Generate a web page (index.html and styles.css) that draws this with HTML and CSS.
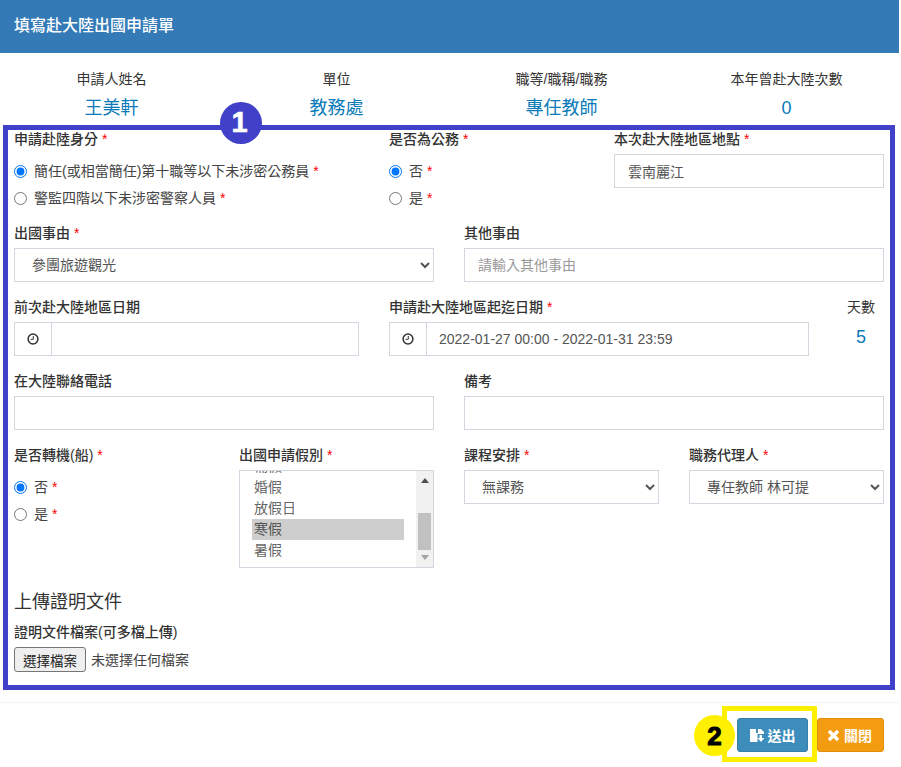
FILE: index.html
```html
<!DOCTYPE html>
<html lang="zh-Hant">
<head>
  <meta charset="UTF-8" />
  <meta name="viewport" content="width=device-width, initial-scale=1.0"/>
  <title>填寫赴大陸出國申請單</title>
  <link rel="stylesheet" href="styles.css">
</head>
<body>

<div class="modal">
  <div class="modal-header">填寫赴大陸出國申請單</div>

  <div class="info">
    <div class="info-item"><div class="info-label">申請人姓名</div><div class="info-value">王美軒</div></div>
    <div class="info-item"><div class="info-label">單位</div><div class="info-value">教務處</div></div>
    <div class="info-item"><div class="info-label">職等/職稱/職務</div><div class="info-value">專任教師</div></div>
    <div class="info-item"><div class="info-label">本年曾赴大陸次數</div><div class="info-value">0</div></div>
  </div>

  <form class="form">
    <div class="row row-first">
      <div class="col span-5">
        <label class="label">申請赴陸身分 <i>*</i></label>
        <label class="radio"><input type="radio" name="identity" checked> 簡任(或相當簡任)第十職等以下未涉密公務員 <i>*</i></label>
        <label class="radio"><input type="radio" name="identity"> 警監四階以下未涉密警察人員 <i>*</i></label>
      </div>
      <div class="col span-3">
        <label class="label">是否為公務 <i>*</i></label>
        <label class="radio"><input type="radio" name="official" checked> 否 <i>*</i></label>
        <label class="radio"><input type="radio" name="official"> 是 <i>*</i></label>
      </div>
      <div class="col span-4">
        <label class="label">本次赴大陸地區地點 <i>*</i></label>
        <input class="control" type="text" value="雲南麗江">
      </div>
    </div>

    <div class="row">
      <div class="col span-6">
        <label class="label">出國事由 <i>*</i></label>
        <select class="control"><option>參團旅遊觀光</option></select>
      </div>
      <div class="col span-6">
        <label class="label">其他事由</label>
        <input class="control" type="text" placeholder="請輸入其他事由">
      </div>
    </div>

    <div class="row">
      <div class="col span-5">
        <label class="label">前次赴大陸地區日期</label>
        <div class="input-group">
          <span class="addon"><svg width="12" height="12" viewBox="0 0 12 12"><circle cx="6" cy="6" r="4.9" fill="none" stroke="#333" stroke-width="1.5"/><path d="M6.3 3v3.3H3.6" fill="none" stroke="#333" stroke-width="1"/></svg></span>
          <input class="control" type="text">
        </div>
      </div>
      <div class="col span-6">
        <label class="label">申請赴大陸地區起迄日期 <i>*</i></label>
        <div class="input-group">
          <span class="addon"><svg width="12" height="12" viewBox="0 0 12 12"><circle cx="6" cy="6" r="4.9" fill="none" stroke="#333" stroke-width="1.5"/><path d="M6.3 3v3.3H3.6" fill="none" stroke="#333" stroke-width="1"/></svg></span>
          <input class="control" type="text" value="2022-01-27 00:00 - 2022-01-31 23:59">
        </div>
      </div>
      <div class="col span-1 days">
        <div class="days-label">天數</div>
        <div class="days-value">5</div>
      </div>
    </div>

    <div class="row">
      <div class="col span-6">
        <label class="label">在大陸聯絡電話</label>
        <input class="control" type="text">
      </div>
      <div class="col span-6">
        <label class="label">備考</label>
        <input class="control" type="text">
      </div>
    </div>

    <div class="row row-last">
      <div class="col span-3">
        <label class="label">是否轉機(船) <i>*</i></label>
        <label class="radio"><input type="radio" name="transfer" checked> 否 <i>*</i></label>
        <label class="radio"><input type="radio" name="transfer"> 是 <i>*</i></label>
      </div>
      <div class="col span-3">
        <label class="label">出國申請假別 <i>*</i></label>
        <div class="listbox">
          <ul class="list">
            <li>補假</li>
            <li>婚假</li>
            <li>放假日</li>
            <li class="selected">寒假</li>
            <li>暑假</li>
          </ul>
          <div class="scrollbar">
            <span class="arrow-up"></span>
            <span class="thumb"></span>
            <span class="arrow-down"></span>
          </div>
        </div>
      </div>
      <div class="col span-3">
        <label class="label">課程安排 <i>*</i></label>
        <select class="control"><option>無課務</option></select>
      </div>
      <div class="col span-3">
        <label class="label">職務代理人 <i>*</i></label>
        <select class="control"><option>專任教師 林可提</option></select>
      </div>
    </div>

    <div class="upload">
      <h4 class="upload-title">上傳證明文件</h4>
      <label class="label">證明文件檔案(可多檔上傳)</label>
      <div class="file">
        <button type="button" class="file-btn">選擇檔案</button>
        <span>未選擇任何檔案</span>
      </div>
    </div>
  </form>

  <div class="modal-footer">
    <button type="button" class="btn btn-send">
      <svg width="15" height="13" viewBox="0 0 15 13"><path fill="#fff" d="M0 0h6v4h2V0h3l3 3v2H7.500v8H0z"/><path fill="#fff" d="M9.500 6H12v3h2.500L11 13 7.500 9h2z"/></svg>
      送出
    </button>
    <button type="button" class="btn btn-close">
      <svg width="13" height="13" viewBox="0 0 13 13"><path d="M2 2l9 9M11 2l-9 9" stroke="#fff" stroke-width="3.400" fill="none"/></svg>
      關閉
    </button>
  </div>

  <!-- annotations drawn over the form -->
  <div class="mark-box"></div>
  <div class="badge badge-1">1</div>
  <div class="mark-send"></div>
  <div class="badge badge-2">2</div>
</div>

</body>
</html>
```

FILE: styles.css
```css
* { box-sizing: border-box; }
body {
  margin: 0; background: #fff; color: #333;
  font-family: "Liberation Sans", "Noto Sans CJK TC", sans-serif;
  font-size: 14px; line-height: 20px;
}
i { color: #f00; font-style: normal; font-weight: 400; }

.modal { position: relative; width: 899px; height: 767px; overflow: hidden; }
.modal-header {
  height: 53px; padding: 15px 14px; background: #337ab7; color: #fff;
  font-size: 16px; font-weight: 500; line-height: 22px;
}

.info { display: grid; grid-template-columns: repeat(4, 225px); margin-left: -1px; padding-top: 16px; text-align: center; }
.info-label { line-height: 20px; }
.info-value { margin-top: 7px; font-size: 18px; line-height: 25px; color: #0a7ab8; }

.row { display: grid; grid-template-columns: repeat(12, 75px); margin-left: -1px; margin-bottom: 15px; height: 59px; }
.row-first { margin-top: 8px; margin-bottom: 10px; height: 84px; }
.row-last { margin-bottom: 0; height: 123px; }
.col { padding: 0 15px; min-width: 0; }
.span-1 { grid-column: span 1; }
.span-3 { grid-column: span 3; }
.span-4 { grid-column: span 4; }
.span-5 { grid-column: span 5; }
.span-6 { grid-column: span 6; }

.label { display: block; height: 20px; margin-bottom: 5px; font-weight: 500; font-size: 14px; color: #333; }
.radio { display: flex; align-items: center; gap: 7px; height: 27px; padding-bottom: 2px; font-size: 14px; color: #444; }
.radio input { width: 13px; height: 13px; margin: 2px 0 0; }
.radio i { margin-left: -3px; }
.col .label + .radio { margin-top: 9px; }

.control {
  display: block; width: 100%; height: 34px; padding: 6px 13px;
  border: 1px solid #d2d6de; border-radius: 0; background: #fff; color: #555;
  font: 14px "Liberation Sans", "Noto Sans CJK TC", sans-serif;
  outline: none;
}
.control::placeholder { color: #999; }

.input-group { display: flex; height: 34px; }
.addon {
  display: flex; align-items: center; justify-content: center; flex: 0 0 38px;
  border: 1px solid #d2d6de;
}
.input-group .control { margin-left: -1px; flex: 1; width: auto; padding-left: 12px; }

.days { text-align: center; padding: 0; }
.days-label { height: 20px; margin-bottom: 7px; margin-left: -1px; }
.days-value { font-size: 18px; line-height: 26px; color: #0a7ab8; margin-left: -1px; }

.listbox { display: flex; height: 98px; border: 1px solid #d2d6de; overflow: hidden; }
.list { flex: 1; margin: -15px 0 0; padding: 0 12px 0 12px; list-style: none; color: #666; font-size: 14px; }
.list li { height: 21px; padding: 0 2px; line-height: 21px; }
.list .selected { background: #cecece; color: #555; }
.scrollbar { display: flex; flex-direction: column; align-items: center; flex: 0 0 17px; background: #f1f1f1; }
.arrow-up { margin-top: 7px; border: 4px solid transparent; border-top: 0; border-bottom: 5px solid #505050; }
.thumb { width: 13px; height: 37px; margin-top: 30px; background: #c1c1c1; }
.arrow-down { margin-top: 5px; border: 4px solid transparent; border-bottom: 0; border-top: 5px solid #a3a3a3; }

.upload { margin-top: 22px; padding-left: 14px; height: 112px; }
.upload-title { margin: 0 0 8px; font-size: 18px; font-weight: 400; line-height: 24px; color: #333; }
.file { display: flex; align-items: center; gap: 5px; color: #444; font-size: 14px; }
.file-btn {
  width: 72px; height: 25px; padding: 0; border: 1px solid #767676; border-radius: 3px;
  background: #efefef; color: #222;
  font: 13.500px "Liberation Sans", "Noto Sans CJK TC", sans-serif;
}

.modal-footer {
  display: flex; justify-content: flex-end; gap: 9px; height: 65px;
  padding: 15px 15px 0 0; border-top: 1px solid #f4f4f4;
}
.btn {
  display: flex; align-items: center; justify-content: center; gap: 3px; height: 34px; padding: 0;
  border: 1px solid; border-radius: 3px; color: #fff; font: 700 14px "Liberation Sans", "Noto Sans CJK TC", sans-serif;
}
.btn-send { width: 71px; background: #3c8dbc; border-color: #367fa9; }
.btn-close { width: 67px; gap: 4px; padding-right: 2px; background: #f39c12; border-color: #e08e0b; }

.mark-box { position: absolute; left: 3px; top: 125px; width: 892px; height: 565px; border: 5px solid #4040c8; }
.mark-send { position: absolute; left: 722px; top: 706px; width: 95px; height: 56px; border: 5px solid #ffef00; }
.badge {
  position: absolute; width: 42px; height: 42px; border-radius: 50%;
  font-family: "Liberation Sans", sans-serif; font-weight: 700; text-align: center;
}
.badge-1 { left: 220px; top: 102px; padding-right: 3px; background: #4040c8; color: #fff; font-size: 29px; line-height: 41px; -webkit-text-stroke: 0.6px #fff; }
.badge-2 { left: 694px; top: 715px; width: 41px; height: 41px; background: #ffef00; color: #000; font-size: 26px; line-height: 42px; -webkit-text-stroke: 1px #000; }
```
